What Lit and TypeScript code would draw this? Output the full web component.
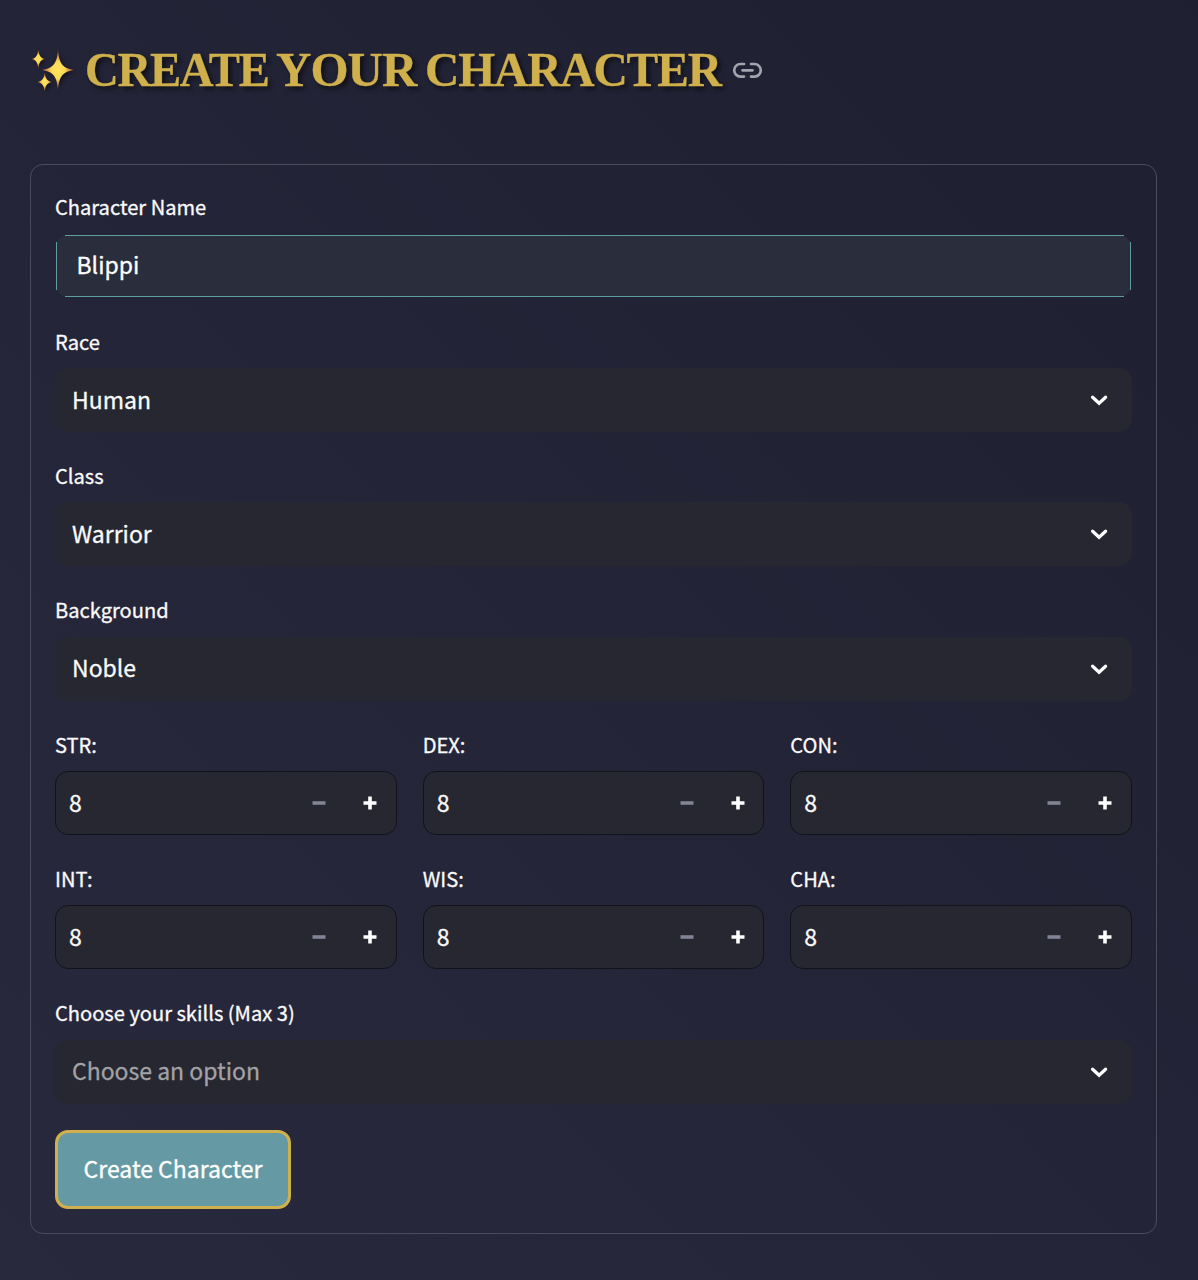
import { LitElement, html, css } from "lit";
import { customElement, property } from "lit/decorators.js";

const fieldStyles = css`
  .label { font-size: 20.1px; line-height: 36.8px; height: 44.4px; }
`;

@customElement("select-field")
class SelectField extends LitElement {
  @property() label = "";
  @property() value = "";
  @property({ type: Boolean }) placeholder = false;

  static styles = [fieldStyles, css`
    :host { display: block; }
    .box {
      height: 64px; box-sizing: border-box; padding: 0 20px 0 17px;
      display: flex; align-items: center; justify-content: space-between;
      background: #262730; border-radius: 13px; font-size: 23px; line-height: 36px;
    }
    .text { padding-bottom: 3px; }
    .muted { color: #a2a2a7; }
    svg { display: block; }
  `];

  render() {
    return html`
      <div class="label">${this.label}</div>
      <div class="box">
        <span class=${this.placeholder ? "text muted" : "text"}>${this.value}</span>
        <svg width="26" height="26" viewBox="0 0 26 26">
          <path d="M6.6 10.2 L13.1 16.2 L19.6 10.2" fill="none" stroke="#fff" stroke-width="3.2" stroke-linecap="round" stroke-linejoin="miter" />
        </svg>
      </div>
    `;
  }
}

@customElement("stat-field")
class StatField extends LitElement {
  @property() label = "";
  @property({ type: Number }) value = 8;

  static styles = [fieldStyles, css`
    :host { display: block; }
    .box {
      height: 64px; box-sizing: border-box; padding: 0 0 0 13px;
      display: flex; align-items: center;
      background: #262730; border: 1px solid #12131a; border-radius: 13px;
      font-size: 23px; line-height: 36px;
    }
    .value { flex: 1; padding-bottom: 2.6px; }
    .step { width: 51px; display: flex; justify-content: center; }
    svg { display: block; }
  `];

  render() {
    return html`
      <div class="label">${this.label}</div>
      <div class="box">
        <span class="value">${this.value}</span>
        <span class="step"><svg width="14" height="14" viewBox="0 0 14 14"><path d="M.5 7H13.5" stroke="#808495" stroke-width="3.6" /></svg></span>
        <span class="step"><svg width="14" height="14" viewBox="0 0 14 14"><path d="M.5 7H13.5M7 .5V13.5" stroke="#fff" stroke-width="3.6" /></svg></span>
      </div>
    `;
  }
}

@customElement("app-root")
class AppRoot extends LitElement {
  static styles = [fieldStyles, css`
    :host {
      display: block; box-sizing: border-box; height: 1280px; overflow: hidden;
      padding: 0 41px 0 30px; color: #fafafa;
      font-family: "Noto Sans CJK SC", "Open Sans", sans-serif; font-weight: 400;
      -webkit-text-stroke: .3px currentColor;
      background: linear-gradient(45deg, #29293e, #1e1f30);
    }
    .header { height: 164px; box-sizing: border-box; padding-top: 38px; display: flex; align-items: flex-start; }
    .sparkles { display: block; margin-top: 10px; width: 46px; height: 46px; filter: drop-shadow(2px 2px 2px rgba(0, 0, 0, .45)); }
    h1 {
      margin: 0 0 0 9px; display: flex; color: #cfb04c;
      font: 700 49px/64px "Liberation Serif", serif; text-transform: uppercase;
      text-shadow: 3px 3px 5px rgba(0, 0, 0, .6);
    }
    h1 span { transform-origin: left; white-space: nowrap; }
    .w1 { width: 191px; letter-spacing: -1.4px; transform: scaleX(.955); }
    .w2 { width: 149px; letter-spacing: -1px; }
    .w3 { width: 307px; letter-spacing: -1.2px; transform: scaleX(.97); }
    .link { display: block; margin-top: 16px; }
    .form {
      height: 1070px; box-sizing: border-box; padding: 24px;
      border: 1px solid #4b4c5b; border-radius: 13px;
      display: flex; flex-direction: column; gap: 26px;
    }
    .fields { display: flex; flex-direction: column; gap: 25.95px; padding-top: .4px; }
    .shell { height: 64px; box-sizing: border-box; padding: 1.2px 1px .8px; }
    .input {
      position: relative; height: 62px; box-sizing: border-box; padding: 0 20.5px 3px;
      display: flex; align-items: center; background: #2a2d3b; border-radius: 12px;
      font-size: 23px; line-height: 36px; color: #fff;
    }
    .top, .bottom, .left, .right { position: absolute; background: #5f9ea0; }
    .top, .bottom { left: 9px; right: 7px; height: 1px; }
    .top { top: 0; }
    .bottom { bottom: 0; }
    .left, .right { top: 7px; bottom: 7px; width: 1px; }
    .left { left: 0; }
    .right { right: 0; }
    .stats { display: grid; grid-template-columns: repeat(3, 1fr); column-gap: 26px; row-gap: 25.95px; }
    .button {
      align-self: flex-start; width: 236px; height: 79px; box-sizing: border-box; padding: 0 0 3px;
      border: 3px solid #cfb04c; border-radius: 13px; background: #659aa4; color: #fff;
      -webkit-text-stroke: .3px currentColor;
      font-family: inherit; font-size: 23px; line-height: 36px; text-align: center;
    }
  `];

  private stats = ["STR", "DEX", "CON", "INT", "WIS", "CHA"];

  render() {
    return html`
      <div class="header">
        <svg class="sparkles" viewBox="0 0 46 46">
          <defs>
            <radialGradient id="glow">
              <stop offset="0" stop-color="#ffe45c" />
              <stop offset=".42" stop-color="#fdd95a" />
              <stop offset=".75" stop-color="#c98648" />
              <stop offset="1" stop-color="#7a4d40" />
            </radialGradient>
          </defs>
          <g fill="url(#glow)">
            <path d="M28 2 C29 14 31.5 20 44 22 C31.5 24 29 30 28 42 C27 30 24.5 24 12 22 C24.5 20 27 14 28 2Z" />
            <path d="M8.3 1.5 C8.9 7 10 9.8 15 11 C10 12.2 8.9 15 8.3 20.5 C7.7 15 6.6 12.2 1.6 11 C6.6 9.8 7.7 7 8.3 1.5Z" />
            <path d="M14.7 24.5 C15.3 30 16.6 32.8 22 34 C16.6 35.2 15.3 38 14.7 43.5 C14.1 38 12.8 35.2 7.4 34 C12.8 32.8 14.1 30 14.7 24.5Z" />
          </g>
        </svg>
        <h1><span class="w1">Create</span><span class="w2">Your</span><span class="w3">Character</span></h1>
        <svg class="link" width="32" height="32" viewBox="0 0 32 32" fill="none" stroke="#a3a4ae" stroke-width="2.7" stroke-linecap="round">
          <path d="M12 10 H8.5 A6.3 6.3 0 0 0 8.5 22.6 H12 M19 10 H22.5 A6.3 6.3 0 0 1 22.5 22.6 H19 M10.5 16.3 H20.5" />
        </svg>
      </div>
      <div class="form">
        <div class="fields">
          <div>
            <div class="label">Character Name</div>
            <div class="shell">
              <div class="input">
                Blippi
                <span class="top"></span><span class="bottom"></span><span class="left"></span><span class="right"></span>
              </div>
            </div>
          </div>
          <select-field label="Race" value="Human"></select-field>
          <select-field label="Class" value="Warrior"></select-field>
          <select-field label="Background" value="Noble"></select-field>
          <div class="stats">
            ${this.stats.map((name) => html`<stat-field label=${name + ":"} .value=${8}></stat-field>`)}
          </div>
          <select-field label="Choose your skills (Max 3)" value="Choose an option" placeholder></select-field>
        </div>
        <button class="button">Create Character</button>
      </div>
    `;
  }
}
